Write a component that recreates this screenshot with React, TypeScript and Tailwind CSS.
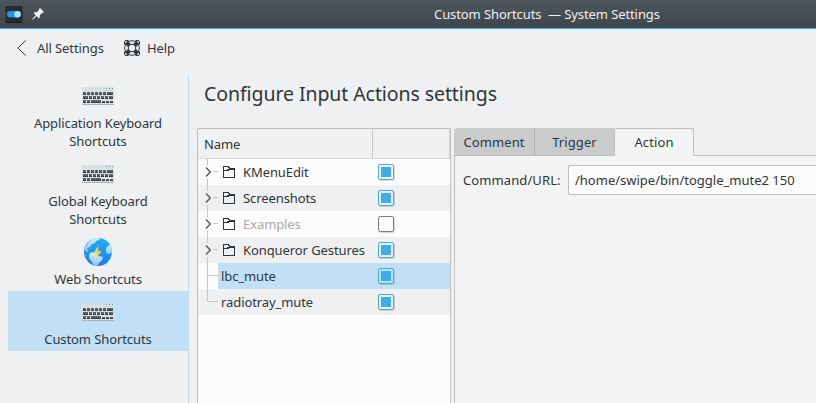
import React from "react";

type Key = [number, number, number, number];

const keys: Key[] = [
  [1, 5, 3, 3], [5, 5, 3, 3], [9, 5, 3, 3], [13, 5, 3, 3], [17, 5, 3, 3], [21, 5, 3, 3], [25, 5, 6, 3],
  [1, 9, 5, 3], [7, 9, 3, 3], [11, 9, 3, 3], [15, 9, 3, 3], [19, 9, 3, 3], [23, 9, 3, 3], [27, 9, 4, 3],
  [1, 13, 3, 3], [5, 13, 3, 3], [9, 13, 10, 3], [20, 14, 3, 2], [24, 14, 3, 2], [28, 14, 3, 2],
];

function KeyboardIcon() {
  return (
    <svg width="32" height="18" viewBox="0 0 32 18" shapeRendering="crispEdges">
      <rect width="32" height="18" fill="#dadfe1" />
      <rect y="17" width="32" height="1" fill="#a9b3b9" />
      {keys.map(([x, y, w, h]) => (
        <g key={`${x}-${y}`}>
          <rect x={x} y={y} width={w} height={h} fill="#566267" />
          <rect x={x} y={y + h - 1} width={w} height="1" fill="#323c40" />
        </g>
      ))}
      {[24, 27, 30].map((x) => (
        <rect key={x} x={x} y="1" width="1" height="1" fill="#2ecc8f" />
      ))}
    </svg>
  );
}

function GlobeIcon() {
  return (
    <svg width="28" height="28" viewBox="0 0 28 28">
      <defs>
        <linearGradient id="sea" x1="0" y1="0" x2="0" y2="1">
          <stop offset="0" stopColor="#1fb0ea" />
          <stop offset="1" stopColor="#1d7af5" />
        </linearGradient>
        <linearGradient id="land" x1="0" y1="0" x2="0" y2="1">
          <stop offset="0" stopColor="#d3f0fb" />
          <stop offset="1" stopColor="#94c1fc" />
        </linearGradient>
        <clipPath id="disc"><circle cx="14" cy="14" r="14" /></clipPath>
      </defs>
      <g clipPath="url(#disc)">
        <rect width="28" height="28" fill="url(#sea)" />
        <path d="M2 8 L5 3.500 L10 0 H16 L15 2 L12 3 L11 5 L8 6 L6 9 L3 10 L3.500 12 L5 13 L3 14 L0 11 Z" fill="url(#land)" />
        <path d="M5 16 L8 14 L12 15 L14 18 L19 19 L18 22 L16 24 L13 28 H10 L8 24 L5 20 Z" fill="url(#land)" />
        <path d="M28 6 L25 7 L22 10 L22 14 L24 16 L28 15 Z" fill="url(#land)" />
      </g>
      <path d="M14.500 7 L9.500 15.500 H13 L12 21 L17.500 13 H14 Z" fill="#fdd43b" />
    </svg>
  );
}

function AppIcon() {
  return (
    <svg width="18" height="18" viewBox="0 0 18 18">
      <rect x=".5" width="17" height="17" rx="1" fill="#282b2f" />
      <rect x="1" y="16" width="16" height="1" fill="#16181a" />
      <rect x="2" y="5" width="14" height="6.500" rx="3.250" fill="#1d93f3" />
      <circle cx="12.500" cy="8.200" r="3.200" fill="#b8ddfa" />
    </svg>
  );
}

function PinIcon() {
  return (
    <svg width="12" height="12" viewBox="0 0 12 12" fill="#f5f6f6">
      <path d="M8 0 L12 4 L10.800 5 L10.200 4.700 L7.700 7.200 L7.800 9.500 L6.800 10.300 L4.600 8.100 L.8 11.700 L.2 11.100 L3.800 7.300 L1.700 5.200 L2.500 4.200 L4.800 4.300 L7.300 1.800 L7 1.200 Z" />
    </svg>
  );
}

function HelpIcon() {
  return (
    <svg width="16" height="16" viewBox="0 0 16 16" fill="none" stroke="#31363b">
      <circle cx="8" cy="8" r="7.300" strokeWidth="1" />
      <circle cx="8" cy="8" r="3.800" strokeWidth="1" />
      <path d="M2.200 2.200 L5.400 5.400 M13.800 2.200 L10.600 5.400 M2.200 13.800 L5.400 10.600 M13.800 13.800 L10.600 10.600" strokeWidth="4.200" />
      <path d="M.5 4.500 V1 M1 .5 H4.500 M11.500 .5 H15 M15.500 1 V4.500 M15.500 11.500 V15 M15 15.500 H11.500 M4.500 15.500 H1 M.5 15 V11.500" />
    </svg>
  );
}

function FolderIcon() {
  return (
    <svg width="12" height="12" viewBox="0 0 12 12" fill="#31363b" shapeRendering="crispEdges">
      <path fillRule="evenodd" d="M0 0 H6 V1 H7 V2 H12 V12 H0 Z M1 1 V4 H4 V3 H6 V2 H5 V1 Z M1 5 V11 H11 V4 H6 V5 Z" />
    </svg>
  );
}

function Branch({ kind }: { kind: "expand" | "tee" | "end" }) {
  return (
    <svg width="20" height="26" viewBox="0 0 20 26" className="shrink-0">
      <g fill="#c4c6c7" shapeRendering="crispEdges">
        {kind === "expand" ? (
          <>
            <rect x="9" width="1" height="6" />
            <rect x="9" y="20" width="1" height="6" />
            <rect x="15" y="12" width="5" height="1" />
          </>
        ) : (
          <>
            <rect x="9" width="1" height={kind === "tee" ? 26 : 13} />
            <rect x="9" y="12" width="11" height="1" />
          </>
        )}
      </g>
      {kind === "expand" && <path d="M8 8.500 L12.300 13 L8 17.500" fill="none" stroke="#4d5256" strokeWidth="1.300" />}
    </svg>
  );
}

function Check({ on }: { on: boolean }) {
  return (
    <span
      className={`flex size-4 items-center justify-center rounded-[2px] border shadow-[1px_1px_0_rgba(0,0,0,0.14)] ${
        on ? "border-[#3daee9]" : "border-[#7b7e81] bg-[#fcfcfc]"
      }`}
    >
      {on && <span className="size-2.5 bg-[#3daee9]" />}
    </span>
  );
}

const sections = [
  { lines: ["Application Keyboard", "Shortcuts"] },
  { lines: ["Global Keyboard", "Shortcuts"] },
  { lines: ["Web Shortcuts"], globe: true },
  { lines: ["Custom Shortcuts"], active: true },
];

const rows = [
  { name: "KMenuEdit", folder: true, on: true, bg: "bg-[#fcfcfc]" },
  { name: "Screenshots", folder: true, on: true, bg: "bg-[#eff0f1]" },
  { name: "Examples", folder: true, on: false, bg: "bg-[#fcfcfc]" },
  { name: "Konqueror Gestures", folder: true, on: true, bg: "bg-[#eff0f1]" },
  { name: "lbc_mute", folder: false, on: true, bg: "bg-[#fcfcfc]", active: true },
  { name: "radiotray_mute", folder: false, on: true, bg: "bg-[#eff0f1]" },
];

export default function App() {
  return (
    <div className="flex h-[403px] w-[816px] flex-col overflow-hidden bg-[#eff0f1] font-['Noto_Sans',sans-serif] text-[13px] leading-[18px] tracking-[-0.09px] whitespace-nowrap text-[#31363b]">
      <header className="flex h-[29px] shrink-0 items-start border-b border-[#3daee9] bg-linear-to-b from-[#4d565e] to-[#3f464c]">
        <div className="mt-1.5 ml-[5px]"><AppIcon /></div>
        <div className="mt-2 ml-[9px] w-[402px]"><PinIcon /></div>
        <h1 className="mt-[5px] whitespace-pre text-[#eff0f1]">Custom Shortcuts  — System Settings</h1>
      </header>

      <nav className="flex h-[46px] shrink-0 items-start pt-[10px]">
        <svg className="mt-[1px] ml-[16px]" width="12" height="16" viewBox="0 0 12 16" fill="none" stroke="#31363b">
          <path d="M9.500 .5 L2 8 L9.500 15.500" />
        </svg>
        <span className="ml-[9px] w-[87px]">All Settings</span>
        <div className="mt-[1px]"><HelpIcon /></div>
        <span className="ml-[7px]">Help</span>
      </nav>

      <div className="flex min-h-0 flex-1">
        <aside className="ml-2 w-[181px] shrink-0 border-r border-[#c0def3]">
          {sections.map((s, i) => (
            <div key={i} className={`flex flex-col items-center pt-[5px] pb-[3px] ${s.active ? "bg-[#c2e0f5]" : ""}`}>
              <div className="mb-0.5 flex h-8 items-center">{s.globe ? <GlobeIcon /> : <KeyboardIcon />}</div>
              {s.lines.map((l) => <span key={l}>{l}</span>)}
            </div>
          ))}
        </aside>

        <main className="ml-2 flex min-w-0 flex-1 flex-col">
          <h2 className="h-[53px] shrink-0 pt-[5px] pl-[7px] text-[19.5px] leading-7 tracking-[-0.08px]">Configure Input Actions settings</h2>
          <div className="flex min-h-0 flex-1">
            <section className="w-[254px] shrink-0 rounded-tl-[2px] rounded-tr-[2px] border-x border-t border-[#bcbec0] bg-[#fcfcfc]">
              <div className="flex h-[30px] border-b border-[#d3d5d6] bg-[#eff0f1]">
                <span className="w-[175px] border-r border-[#c4c6c7] pt-1.5 pl-1.5">Name</span>
                <span className="flex-1 border-r border-[#d3d5d6]" />
              </div>
              {rows.map((r) => (
                <div key={r.name} className={`flex h-[26px] ${r.bg}`}>
                  <Branch kind={r.folder ? "expand" : r.active ? "tee" : "end"} />
                  <div className={`flex flex-1 items-center ${r.active ? "bg-[#c2e0f5]" : ""}`}>
                    <div className="flex w-[160px] items-center pl-[3px]">
                      {r.folder && <span className="mr-2 ml-0.5"><FolderIcon /></span>}
                      <span className={r.name === "Examples" ? "text-[#a8abad]" : ""}>{r.name}</span>
                    </div>
                    <Check on={r.on} />
                  </div>
                </div>
              ))}
            </section>

            <section className="ml-[3px] flex min-w-0 flex-1 flex-col">
              <div className="flex h-[28px] shrink-0 items-stretch text-center tracking-[0.1px]">
                <span className="w-[81px] rounded-tl-[3px] border-r border-b border-r-[#aeb0b2] border-b-[#bcbec0] bg-[#c9cbcd] pt-[5px]">Comment</span>
                <span className="w-[79px] border-b border-[#bcbec0] bg-[#c9cbcd] pt-[5px]">Trigger</span>
                <span className="w-[80px] rounded-t-[2px] border-x border-t border-[#bcbec0] bg-[#f3f5f4] pt-1">Action</span>
                <span className="flex-1 border-b border-[#bcbec0]" />
              </div>
              <div className="flex min-h-0 flex-1 items-start border-l border-[#bcbec0] bg-[#f3f5f4] pt-[9px] pl-2">
                <span className="w-[105px] pt-1.5 tracking-[0.1px]">Command/URL:</span>
                <span className="h-[30px] flex-1 rounded-l-[2px] border-y border-l border-[#bcbec0] bg-[#fcfcfc] pt-[5px] pl-1.5 tracking-normal">/home/swipe/bin/toggle_mute2 150</span>
              </div>
            </section>
          </div>
        </main>
      </div>
    </div>
  );
}
